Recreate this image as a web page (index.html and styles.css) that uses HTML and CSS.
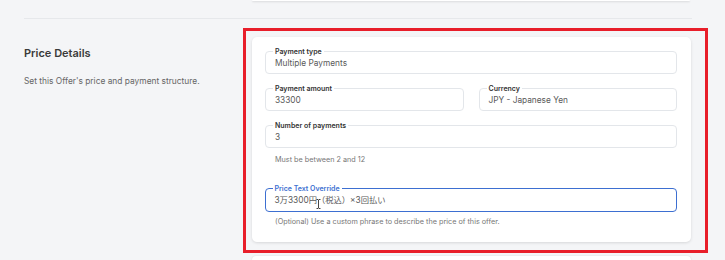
FILE: index.html
```html
<!DOCTYPE html>
<html lang="en">
<head>
<meta charset="utf-8">
<link rel="stylesheet" href="styles.css">
</head>
<body>
<div class="page">
  <div class="prev-card"></div>
  <hr class="divider">
  <section class="section">
    <div class="intro">
      <h2 class="title">Price Details</h2>
      <p class="desc">Set this Offer's price and payment structure.</p>
    </div>
    <div class="highlight">
      <div class="card">
        <div class="field">
          <span class="label">Payment type</span>
          <span class="value">Multiple Payments</span>
        </div>
        <div class="row">
          <div class="field">
            <span class="label">Payment amount</span>
            <span class="value">33300</span>
          </div>
          <div class="field">
            <span class="label">Currency</span>
            <span class="value">JPY - Japanese Yen</span>
          </div>
        </div>
        <div class="group">
          <div class="field">
            <span class="label">Number of payments</span>
            <span class="value">3</span>
          </div>
          <p class="help">Must be between 2 and 12</p>
        </div>
        <div class="group override">
          <div class="field focused">
            <span class="label">Price Text Override</span>
            <span class="value jp">3万3300円（税込）×3回払い</span>
            <svg class="ibeam" width="5" height="10" viewBox="0 0 5 10" aria-hidden="true">
              <path d="M0.5 0.5h1.5l0.5 0.5l0.5-0.5h1.5M2.5 1v8M0.5 9.5h1.5l0.5-0.5l0.5 0.5h1.5" fill="none" stroke="#333" stroke-width="0.9"/>
            </svg>
          </div>
          <p class="help">(Optional) Use a custom phrase to describe the price of this offer.</p>
        </div>
      </div>
    </div>
  </section>
  <div class="next-card"></div>
</div>
</body>
</html>
```

FILE: styles.css
```css
* { box-sizing: border-box; }
html, body { margin: 0; padding: 0; }
body {
  background: #f4f5f7;
  font-family: Inter, "Noto Sans CJK JP", sans-serif;
  color: #333;
  width: 725px;
  height: 260px;
  overflow: hidden;
}
.page {
  padding: 0 33px 0 24px;
}
.prev-card {
  margin-left: 228px;
  width: 438px;
  height: 1px;
  background: #fff;
  box-shadow: 0 1px 2px rgba(0,0,0,0.15);
  border-radius: 0 0 4px 4px;
}
.divider {
  margin: 17px 0 0 0;
  border: 0;
  border-top: 1px solid #e6e8eb;
  height: 0;
}
.section {
  display: flex;
  margin-top: 9px;
}
.intro {
  width: 219px;
  flex: none;
}
.title {
  margin: 18px 0 0;
  font-size: 11px;
  font-weight: 600;
  color: #3a3a3a;
  line-height: 14px;
}
.desc {
  margin: 16px 0 0;
  font-size: 8.4px;
  color: #666;
  line-height: 11px;
}
.highlight {
  flex: none;
  border: 3px solid #e81e2a;
  padding: 6px 14px 8px 6px;
  width: 465px;
}
.card {
  background: #fff;
  border-radius: 5px;
  box-shadow: 0 1px 3px rgba(0,0,0,0.12);
  padding: 14px 14px 16px 13px;
  display: flex;
  flex-direction: column;
  gap: 14px;
}
.row {
  display: flex;
  gap: 15px;
}
.row .field { flex: 1; }
.field {
  position: relative;
  display: block;
  height: 23px;
  border: 1px solid #e3e6ea;
  border-radius: 4px;
  padding: 6px 0 0 9px;
}
.label {
  position: absolute;
  top: -5px;
  left: 7px;
  padding: 0 2px;
  background: #fff;
  font-size: 7px;
  line-height: 9px;
  font-weight: 600;
  color: #333;
}
.value {
  display: block;
  font-size: 8.3px;
  color: #5a5a5a;
  line-height: 11px;
}
.help {
  margin: 7px 0 0 10px;
  font-size: 7.25px;
  color: #777;
  line-height: 9px;
}
.override { margin-top: 10px; }
.override .help { margin-top: 5px; }
.field.focused {
  border: 1.5px solid #3d6fd1;
  height: 24px;
  padding: 6px 0 0 8.5px;
}
.focused .label { color: #3d6fd1; top: -5.5px; left: 6.5px; }
.value.jp { font-size: 8.3px; }
.ibeam {
  position: absolute;
  left: 50px;
  top: 10px;
}
.next-card {
  margin: 3px 0 0 228px;
  width: 439px;
  height: 10px;
  background: #fff;
  border-radius: 4px;
  box-shadow: 0 0 2px rgba(0,0,0,0.12);
}
```
